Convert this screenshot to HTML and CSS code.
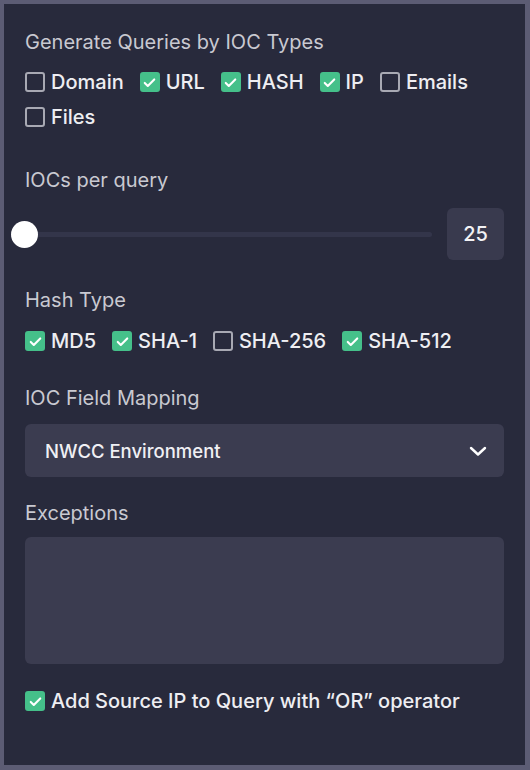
FILE: index.html
```html
<!DOCTYPE html>
<html>
<head>
<meta charset="utf-8">
<link rel="stylesheet" href="styles.css">
</head>
<body>
<div class="frame">
  <div class="panel">
    <div class="section">
      <div class="label">Generate Queries by IOC Types</div>
      <div class="checks">
        <span class="check"><span class="box"></span>Domain</span>
        <span class="check"><span class="box on"><svg viewBox="0 0 20 20"><path d="M5 10.5l3.2 3.2L15 6.8"/></svg></span>URL</span>
        <span class="check"><span class="box on"><svg viewBox="0 0 20 20"><path d="M5 10.5l3.2 3.2L15 6.8"/></svg></span>HASH</span>
        <span class="check"><span class="box on"><svg viewBox="0 0 20 20"><path d="M5 10.5l3.2 3.2L15 6.8"/></svg></span>IP</span>
        <span class="check"><span class="box"></span>Emails</span>
        <span class="check"><span class="box"></span>Files</span>
      </div>
    </div>

    <div class="section s-slider">
      <div class="label">IOCs per query</div>
      <div class="slider-row">
        <div class="slider">
          <div class="track"></div>
          <div class="thumb"></div>
        </div>
        <div class="num">25</div>
      </div>
    </div>

    <div class="section s-hash">
      <div class="label">Hash Type</div>
      <div class="checks hash">
        <span class="check"><span class="box on"><svg viewBox="0 0 20 20"><path d="M5 10.5l3.2 3.2L15 6.8"/></svg></span>MD5</span>
        <span class="check"><span class="box on"><svg viewBox="0 0 20 20"><path d="M5 10.5l3.2 3.2L15 6.8"/></svg></span>SHA-1</span>
        <span class="check"><span class="box"></span>SHA-256</span>
        <span class="check"><span class="box on"><svg viewBox="0 0 20 20"><path d="M5 10.5l3.2 3.2L15 6.8"/></svg></span>SHA-512</span>
      </div>
    </div>

    <div class="section s-map">
      <div class="label">IOC Field Mapping</div>
      <div class="select">
        <span>NWCC Environment</span>
        <svg class="chev" viewBox="0 0 20 20"><path d="M3 7l7 6.5L17 7"/></svg>
      </div>
    </div>

    <div class="section s-exc">
      <div class="label">Exceptions</div>
      <div class="textarea"></div>
    </div>

    <div class="section s-last">
      <span class="check"><span class="box on"><svg viewBox="0 0 20 20"><path d="M5 10.5l3.2 3.2L15 6.8"/></svg></span>Add Source IP to Query with “OR” operator</span>
    </div>
  </div>
</div>
</body>
</html>
```
FILE: styles.css
```css
* { box-sizing: border-box; }
html, body {
  margin: 0;
  padding: 0;
  background: #5c5c74;
}
body {
  font-family: Inter, "Noto Sans", sans-serif;
  width: 530px;
  height: 770px;
}
.frame {
  padding: 4px 5px 5px 4px;
  height: 770px;
}
.panel {
  background: #282a3c;
  height: 100%;
  padding: 28px 21px 0 21px;
  display: flex;
  flex-direction: column;
}
.section {
  display: flex;
  flex-direction: column;
}
.label {
  color: #c9c9d1;
  font-size: 20px;
  line-height: 20px;
  font-weight: 400;
  white-space: nowrap;
}
.checks {
  display: flex;
  flex-wrap: wrap;
  column-gap: 16px;
  row-gap: 13px;
  margin-top: 19px;
}
.checks.hash { margin-top: 20px; }
.check {
  display: inline-flex;
  align-items: center;
  gap: 6px;
  color: #eeeef2;
  font-size: 20px;
  font-weight: 500;
  line-height: 22px;
  white-space: nowrap;
}
.box {
  width: 20px;
  height: 20px;
  border: 2px solid #a8a9b3;
  border-radius: 3px;
  display: inline-flex;
  align-items: center;
  justify-content: center;
  flex: none;
}
.box.on {
  background: #45c08a;
  border-color: #45c08a;
}
.box svg {
  width: 19px;
  height: 19px;
  flex: none;
  fill: none;
  stroke: #ffffff;
  stroke-width: 2.2;
  stroke-linecap: round;
  stroke-linejoin: round;
}
.s-slider { margin-top: 42px; }
.slider-row {
  display: flex;
  align-items: center;
  margin-top: 18px;
}
.slider {
  position: relative;
  flex: 1;
  height: 27px;
  display: flex;
  align-items: center;
}
.track {
  flex: 1;
  height: 5px;
  margin: 0 15px 0 6px;
  background: #33354a;
  border-radius: 3px;
}
.thumb {
  position: absolute;
  left: -14px;
  top: 0;
  width: 27px;
  height: 27px;
  border-radius: 50%;
  background: #ffffff;
}
.num {
  width: 57px;
  height: 52px;
  background: #393a4e;
  border-radius: 6px;
  color: #f2f2f5;
  font-size: 20px;
  font-weight: 500;
  display: flex;
  align-items: center;
  justify-content: center;
}
.s-hash { margin-top: 30px; }
.s-map { margin-top: 36px; }
.select {
  margin-top: 16px;
  height: 53px;
  background: #3b3c50;
  border-radius: 6px;
  display: flex;
  align-items: center;
  justify-content: space-between;
  padding: 0 16px 0 20px;
  color: #f0f0f4;
  font-size: 18.5px;
  font-weight: 500;
}
.chev {
  width: 20px;
  height: 20px;
  fill: none;
  stroke: #ffffff;
  stroke-width: 2.4;
  stroke-linecap: round;
  stroke-linejoin: round;
}
.s-exc { margin-top: 26px; }
.textarea {
  margin-top: 14px;
  height: 127px;
  background: #3b3c50;
  border-radius: 6px;
}
.s-last { margin-top: 26px; }
```
